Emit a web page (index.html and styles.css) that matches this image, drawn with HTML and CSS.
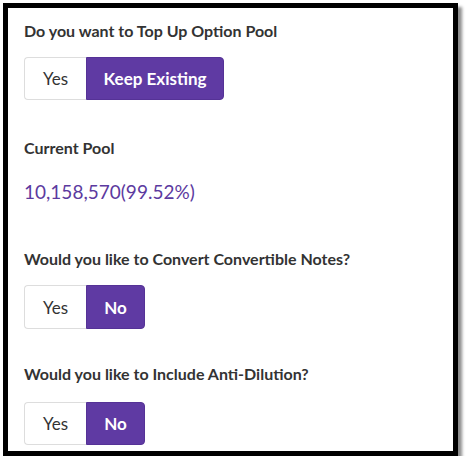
FILE: index.html
```html
<!DOCTYPE html>
<html>
<head>
<meta charset="utf-8">
<link rel="stylesheet" href="styles.css">
</head>
<body>
<div class="frame">
  <div class="field q1">
    <div class="label">Do you want to Top Up Option Pool</div>
    <div class="toggle">
      <span class="opt">Yes</span>
      <span class="opt active wide">Keep Existing</span>
    </div>
  </div>
  <div class="field pool">
    <div class="label">Current Pool</div>
    <div class="value">10,158,570(99.52%)</div>
  </div>
  <div class="field q2">
    <div class="label">Would you like to Convert Convertible Notes?</div>
    <div class="toggle">
      <span class="opt">Yes</span>
      <span class="opt active">No</span>
    </div>
  </div>
  <div class="field q3">
    <div class="label">Would you like to Include Anti-Dilution?</div>
    <div class="toggle">
      <span class="opt">Yes</span>
      <span class="opt active">No</span>
    </div>
  </div>
</div>
</body>
</html>
```

FILE: styles.css
```css
html, body { margin: 0; padding: 0; background: #fff; }
body { font-family: Lato, "Open Sans", sans-serif; color: #333; }
.frame {
  box-sizing: border-box;
  margin: 3px 0 0 3px;
  width: 455px;
  height: 453px;
  border: 5px solid #000;
  box-shadow: 4px 4px 3px rgba(0,0,0,0.45);
  background: #fff;
  padding: 13px 16px 0 16px;
  display: flex;
  flex-direction: column;
}
.label { font-size: 16px; font-weight: 700; line-height: 19px; color: #333; }
.toggle { display: flex; margin-top: 17px; height: 43px; }
.opt {
  box-sizing: border-box;
  display: flex; align-items: center; justify-content: center;
  font-size: 17px; line-height: 1;
  width: 62px;
  border: 1px solid #ddd;
  border-right: none;
  border-radius: 4px 0 0 4px;
  color: #333;
}
.opt.active {
  background: #5f3aa3;
  color: #fff;
  font-weight: 700;
  border: 1px solid #553296;
  border-radius: 0 4px 4px 0;
  width: 59px;
}
.opt.active.wide { width: 138px; }
.pool { margin-top: 38px; }
.value { margin-top: 23px; font-size: 19px; line-height: 23px; color: #5c3aa0; }
.q2 { margin-top: 46px; }
.q2 .toggle { height: 44px; }
.q3 { margin-top: 35px; }
.q3 .toggle { margin-top: 19px; }
```
